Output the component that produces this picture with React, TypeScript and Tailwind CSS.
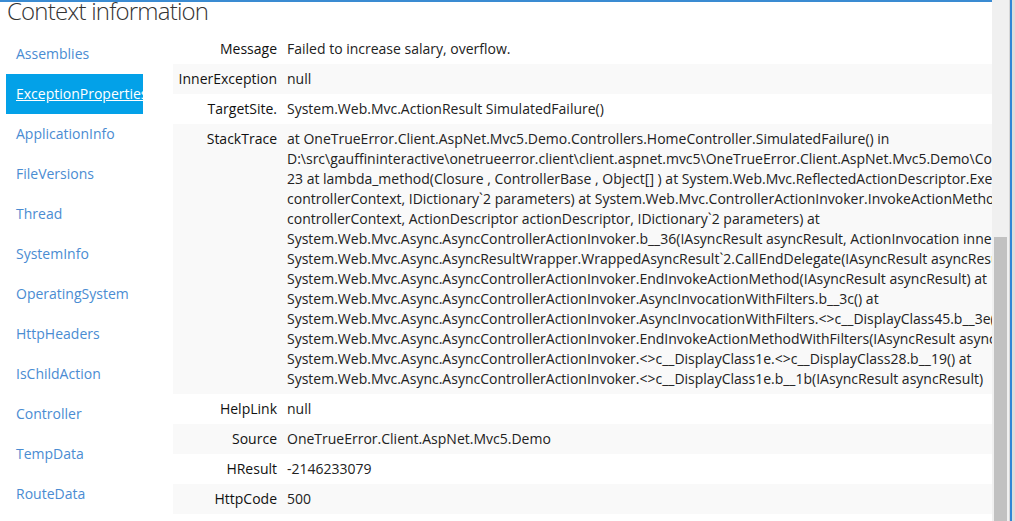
import React from "react";

const nav = [
  "Assemblies",
  "ExceptionProperties",
  "ApplicationInfo",
  "FileVersions",
  "Thread",
  "SystemInfo",
  "OperatingSystem",
  "HttpHeaders",
  "IsChildAction",
  "Controller",
  "TempData",
  "RouteData",
];

const stack = [
  "at OneTrueError.Client.AspNet.Mvc5.Demo.Controllers.HomeController.SimulatedFailure() in",
  "D:\\src\\gauffininteractive\\onetrueerror.client\\client.aspnet.mvc5\\OneTrueError.Client.AspNet.Mvc5.Demo\\Controllers\\HomeController.cs:line",
  "23 at lambda_method(Closure , ControllerBase , Object[] ) at System.Web.Mvc.ReflectedActionDescriptor.Execute(ControllerContext",
  "controllerContext, IDictionary`2 parameters) at System.Web.Mvc.ControllerActionInvoker.InvokeActionMethod(ControllerContext",
  "controllerContext, ActionDescriptor actionDescriptor, IDictionary`2 parameters) at",
  "System.Web.Mvc.Async.AsyncControllerActionInvoker.b__36(IAsyncResult asyncResult, ActionInvocation innerInvokeState) at",
  "System.Web.Mvc.Async.AsyncResultWrapper.WrappedAsyncResult`2.CallEndDelegate(IAsyncResult asyncResult) at",
  "System.Web.Mvc.Async.AsyncControllerActionInvoker.EndInvokeActionMethod(IAsyncResult asyncResult) at",
  "System.Web.Mvc.Async.AsyncControllerActionInvoker.AsyncInvocationWithFilters.b__3c() at",
  "System.Web.Mvc.Async.AsyncControllerActionInvoker.AsyncInvocationWithFilters.<>c__DisplayClass45.b__3e() at",
  "System.Web.Mvc.Async.AsyncControllerActionInvoker.EndInvokeActionMethodWithFilters(IAsyncResult asyncResult) at",
  "System.Web.Mvc.Async.AsyncControllerActionInvoker.<>c__DisplayClass1e.<>c__DisplayClass28.b__19() at",
  "System.Web.Mvc.Async.AsyncControllerActionInvoker.<>c__DisplayClass1e.b__1b(IAsyncResult asyncResult)",
];

const rows: { k: string; v: string[] }[] = [
  { k: "Message", v: ["Failed to increase salary, overflow."] },
  { k: "InnerException", v: ["null"] },
  { k: "TargetSite.", v: ["System.Web.Mvc.ActionResult SimulatedFailure()"] },
  { k: "StackTrace", v: stack },
  { k: "HelpLink", v: ["null"] },
  { k: "Source", v: ["OneTrueError.Client.AspNet.Mvc5.Demo"] },
  { k: "HResult", v: ["-2146233079"] },
  { k: "HttpCode", v: ["500"] },
];

export default function App() {
  return (
    <div
      className="flex w-[1015px] h-[521px] overflow-hidden bg-white text-[14px] text-[#222]"
      style={{ fontFamily: '"Open Sans", "Noto Sans", sans-serif' }}
    >
      <div className="flex flex-col w-[992px] shrink-0 overflow-hidden border-t-2 border-[#3a8bd2]">
        <div className="h-[35px] -mt-[3px] pl-[7px] text-[24px] font-light leading-[24px] tracking-[-0.8px] text-[#333] whitespace-nowrap">
          Context information
        </div>
        <div className="flex">
          <div className="ml-[6px] w-[137px] shrink-0 flex flex-col">
            {nav.map((n) => (
              <div
                key={n}
                className={
                  n === "ExceptionProperties"
                    ? "h-[40px] leading-[40px] pl-[10px] overflow-hidden whitespace-nowrap bg-[#03a1e8] text-white underline"
                    : "h-[40px] leading-[40px] pl-[10px] overflow-hidden whitespace-nowrap text-[#4a8cd2]"
                }
              >
                {n}
              </div>
            ))}
          </div>
          <div className="ml-[30px] flex flex-col shrink-0">
            {rows.map((r, i) => (
              <div
                key={r.k}
                className={i % 2 === 1 ? "flex bg-[#f9f9f9]" : "flex bg-white"}
              >
                <div className="w-[109px] shrink-0 px-[5px] py-[5px] text-right leading-[20px] text-[#111]">
                  {r.k}
                </div>
                <div className="w-[900px] px-[5px] py-[5px] leading-[20px] text-[#222]">
                  {r.v.map((l, j) => (
                    <div key={j} className="whitespace-nowrap">
                      {l}
                    </div>
                  ))}
                </div>
              </div>
            ))}
          </div>
        </div>
      </div>
      <div className="w-[17px] shrink-0 bg-[#f0f0f0] flex flex-col">
        <div className="h-[237px]" />
        <div className="ml-[2px] w-[13px] flex-1 bg-[#c1c1c1]" />
      </div>
      <div className="w-[1px] shrink-0 bg-[#d6d6d6]" />
      <div className="w-[2px] shrink-0 bg-[#2f86d6]" />
      <div className="flex-1 bg-[#dcdcdc]" />
    </div>
  );
}
